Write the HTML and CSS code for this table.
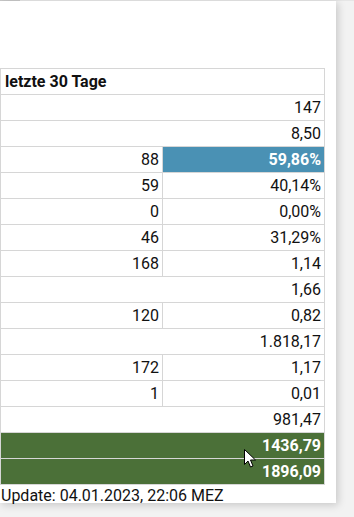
FILE: index.html
```html
<!DOCTYPE html>
<html lang="de">
<head>
<meta charset="utf-8">
<link rel="stylesheet" href="styles.css">
</head>
<body>
<div class="topline"><span class="topline-dark"></span></div>
<div class="card">
  <table class="stats">
    <thead>
      <tr><th colspan="2">letzte 30 Tage</th></tr>
    </thead>
    <tbody>
      <tr><td colspan="2">147</td></tr>
      <tr><td colspan="2">8,50</td></tr>
      <tr><td class="left">88</td><td class="blue">59,86%</td></tr>
      <tr><td class="left">59</td><td>40,14%</td></tr>
      <tr><td class="left">0</td><td>0,00%</td></tr>
      <tr><td class="left">46</td><td>31,29%</td></tr>
      <tr><td class="left">168</td><td>1,14</td></tr>
      <tr><td colspan="2">1,66</td></tr>
      <tr><td class="left">120</td><td>0,82</td></tr>
      <tr><td colspan="2">1.818,17</td></tr>
      <tr><td class="left">172</td><td>1,17</td></tr>
      <tr><td class="left">1</td><td>0,01</td></tr>
      <tr><td colspan="2">981,47</td></tr>
      <tr><td colspan="2" class="green">1436,79</td></tr>
      <tr><td colspan="2" class="green">1896,09</td></tr>
    </tbody>
  </table>
  <div class="update">Update: 04.01.2023, 22:06 MEZ</div>
  <svg class="cursor" width="13" height="20" viewBox="0 0 13 20">
    <path d="M0.5 0.5 L0.5 15.5 L4 12 L6.5 18 L9 17 L6.5 11 L11.5 11 Z" fill="#fff" stroke="#000" stroke-width="1" stroke-linejoin="miter"/>
  </svg>
</div>
</body>
</html>
```
FILE: styles.css
```css
html, body {
  margin: 0;
  padding: 0;
}
body {
  background: #f2f2f2;
  font-family: Roboto, "Liberation Sans", sans-serif;
  color: #111;
  width: 354px;
  height: 517px;
  overflow: hidden;
  position: relative;
}
.topline {
  height: 1px;
  background: #e6e6e6;
  display: flex;
}
.topline-dark {
  width: 20px;
  background: #c8c8c8;
}
.card {
  position: relative;
  width: 336px;
  height: 502px;
  background: #fff;
  box-shadow: 2px 2px 8px rgba(0, 0, 0, 0.18);
  padding-top: 67px;
  box-sizing: border-box;
}
.stats {
  border-collapse: collapse;
  width: 325px;
  table-layout: fixed;
  font-size: 16px;
}
.stats th,
.stats td {
  border: 1px solid #d6d6d6;
  height: 26px;
  padding: 0 3px 0 4px;
  box-sizing: border-box;
  text-align: right;
  line-height: 24px;
  white-space: nowrap;
}
.stats th {
  text-align: left;
  font-weight: 700;
  padding-left: 4px;
}
.stats td.left {
  width: 163px;
}
.stats td.blue {
  background: #4a91b4;
  color: #fff;
  font-weight: 700;
}
.stats td.green {
  background: #4b7038;
  color: #fff;
  font-weight: 700;
}
.update {
  font-size: 16px;
  padding-left: 1px;
  margin-top: 1px;
  line-height: 19px;
}
.cursor {
  position: absolute;
  left: 244px;
  top: 448px;
}
```
